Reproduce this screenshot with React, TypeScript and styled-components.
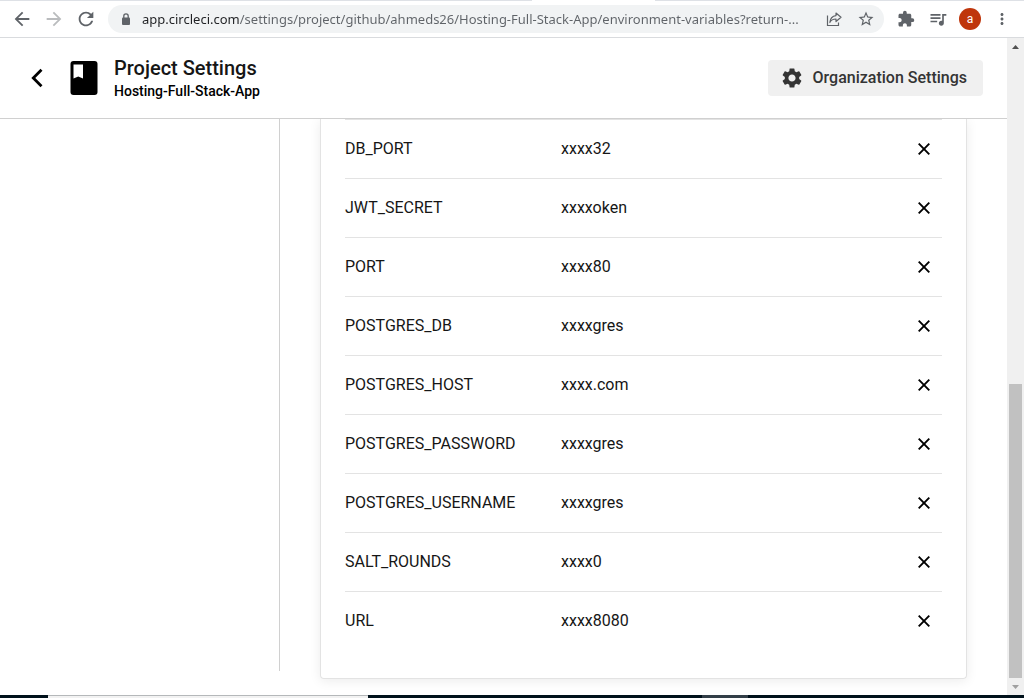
import React from "react";
import styled, { createGlobalStyle } from "styled-components";
import {
  MdArrowBack,
  MdArrowForward,
  MdExtension,
  MdMoreVert,
  MdQueueMusic,
  MdRefresh,
  MdSettings,
  MdStarBorder,
} from "react-icons/md";

const GlobalStyle = createGlobalStyle`
  *, *::before, *::after { box-sizing: border-box; }
  body {
    margin: 0;
    background: #ffffff;
    color: #161616;
    font-family: Roboto, "Liberation Sans", sans-serif;
    font-size: 16px;
  }
  button, input { font: inherit; color: inherit; }
`;

const Screen = styled.div`
  display: flex;
  flex-direction: column;
  min-height: 100vh;
`;

/* Browser toolbar */

const TabStrip = styled.div`
  display: flex;
  height: 1px;
  background: #dee1e6;
`;

const ActiveTab = styled.div`
  width: 12%;
  margin-left: 52%;
  background: #ffffff;
`;

const Toolbar = styled.nav`
  display: flex;
  align-items: center;
  height: 37px;
  padding: 0 6px;
  border-bottom: 1px solid #d9dbde;
`;

const ToolButton = styled.button<{ $faded?: boolean }>`
  display: flex;
  flex: none;
  align-items: center;
  justify-content: center;
  width: 32px;
  height: 28px;
  padding: 0;
  border: 0;
  background: none;
  color: ${(p) => (p.$faded ? "#babcbe" : "#5f6368")};
`;

const Address = styled.label`
  display: flex;
  flex: 1;
  align-items: center;
  min-width: 0;
  height: 28px;
  margin: 0 6px;
  padding: 0 2px 0 13px;
  border-radius: 14px;
  background: #f1f3f4;
  color: #5f6368;
`;

const AddressInput = styled.input`
  flex: 1;
  min-width: 0;
  height: 24px;
  margin-left: 11px;
  padding: 0;
  border: 0;
  outline: 0;
  background: linear-gradient(to right, #202124 98px, #5f6368 98px);
  background-clip: text;
  -webkit-background-clip: text;
  color: transparent;
  font-family: "Noto Sans", "Open Sans", sans-serif;
  font-size: 13px;
`;

const Avatar = styled.span`
  display: flex;
  align-items: center;
  justify-content: center;
  width: 22px;
  height: 22px;
  border-radius: 50%;
  background: #bf360c;
  color: #ffffff;
  font-size: 12px;
`;

/* Page */

const Viewport = styled.div`
  display: flex;
  flex: 1;
`;

const Page = styled.div`
  display: flex;
  flex: 1;
  flex-direction: column;
  min-width: 0;
`;

const Header = styled.header`
  position: relative;
  z-index: 1;
  display: flex;
  align-items: center;
  height: 81px;
  padding: 0 24px;
  border-bottom: 1px solid #d0d0d0;
  background: #ffffff;
`;

const BackLink = styled.a`
  display: flex;
  justify-content: center;
  width: 26px;
  margin-right: 20px;
  color: #000000;
`;

const Titles = styled.div`
  flex: 1;
  margin-left: 16px;
  padding-top: 1px;
`;

const Title = styled.h1`
  margin: 0 0 1px;
  font-size: 20px;
  font-weight: 500;
  line-height: 24px;
`;

const ProjectName = styled.p`
  margin: 0;
  color: #000000;
  font-size: 14px;
  font-weight: 500;
  line-height: 20px;
`;

const SettingsButton = styled.button`
  display: flex;
  align-items: center;
  gap: 9px;
  height: 36px;
  padding: 0 16px 1px 12px;
  border: 0;
  border-radius: 4px;
  background: #f0f0f0;
  color: #343434;
  font-size: 16px;
  font-weight: 500;
`;

const Body = styled.div`
  display: flex;
  flex: 1;
`;

const Sidebar = styled.aside`
  flex: none;
  width: 280px;
  margin-bottom: 24px;
  border-right: 1px solid #d0d0d0;
`;

const Main = styled.main`
  flex: 1;
  min-width: 0;
  padding: 0 40px 16px;
`;

const Card = styled.section`
  height: 100%;
  padding: 0 24px 27px;
  border: 1px solid #e3e3e3;
  border-top: 0;
  border-radius: 0 0 4px 4px;
  box-shadow: 0 2px 12px rgba(0, 0, 0, 0.08);
`;

const Table = styled.table`
  width: 100%;
  border-top: 1px solid #e3e3e3;
  border-spacing: 0;
  table-layout: fixed;
`;

const Row = styled.tr`
  & > * {
    border-bottom: 1px solid #e3e3e3;
  }
  &:last-child > * {
    border-bottom-color: transparent;
  }
`;

const NameCell = styled.th`
  width: 216px;
  height: 59px;
  padding: 0 0 2px;
  font-weight: 400;
  text-align: left;
`;

const ValueCell = styled.td`
  padding: 0 0 2px;
`;

const ActionCell = styled.td`
  width: 36px;
  padding: 0;
`;

const RemoveButton = styled.button`
  display: flex;
  align-items: center;
  justify-content: center;
  width: 36px;
  height: 36px;
  padding: 0;
  border: 0;
  background: none;
  color: #000000;
`;

/* Scroll bar */

const ScrollBar = styled.div`
  display: flex;
  flex: none;
  flex-direction: column;
  align-items: center;
  width: 17px;
  background: #f0f0f0;
`;

const ScrollArrow = styled.div<{ $dim?: boolean }>`
  display: flex;
  flex: none;
  align-items: center;
  height: 17px;
  color: ${(p) => (p.$dim ? "#a0a0a0" : "#505050")};
`;

const ScrollGap = styled.div`
  flex: 329;
`;

const ScrollThumb = styled.div`
  flex: 294;
  width: 13px;
  background: #c1c1c1;
`;

/* Taskbar */

const Taskbar = styled.footer`
  display: flex;
  height: 3px;
  background: #00111b;
`;

const TaskSearch = styled.div`
  width: 320px;
  margin-left: 48px;
  border-top: 1px solid #b5b8ba;
  background: #f2f2f2;
`;

const TaskActive = styled.div`
  width: 46px;
  margin-left: 334px;
  background: #333f48;
`;

const variables = [
  ["DB_PORT", "xxxx32"],
  ["JWT_SECRET", "xxxxoken"],
  ["PORT", "xxxx80"],
  ["POSTGRES_DB", "xxxxgres"],
  ["POSTGRES_HOST", "xxxx.com"],
  ["POSTGRES_PASSWORD", "xxxxgres"],
  ["POSTGRES_USERNAME", "xxxxgres"],
  ["SALT_ROUNDS", "xxxx0"],
  ["URL", "xxxx8080"],
];

const LockIcon = () => (
  <svg width="10" height="12" viewBox="0 0 10 12">
    <rect x="1" y="4.500" width="8" height="7.500" rx="1" fill="currentColor" />
    <path d="M2.800 5V3a2.200 2.200 0 0 1 4.400 0v2" fill="none" stroke="currentColor" strokeWidth="1.300" />
  </svg>
);

const ShareIcon = () => (
  <svg width="16" height="16" viewBox="0 0 16 16" fill="none" stroke="currentColor" strokeWidth="1.2">
    <path d="M1.500 4.500v10h11v-3" />
    <path d="M10 2l5 4.300-5 4.200V8C7 8 5 9 3.800 11.500 4.200 7.500 6.500 5 10 4.600z" strokeLinejoin="round" />
  </svg>
);

const ChevronIcon = () => (
  <svg width="14" height="20" viewBox="0 0 14 20" fill="none" stroke="currentColor" strokeWidth="2.800">
    <path d="M11.500 1.800L3.300 10l8.200 8.200" />
  </svg>
);

const BookIcon = () => (
  <svg width="28" height="34" viewBox="0 0 28 34">
    <rect x="0.500" width="27" height="34" rx="3" fill="#000000" />
    <path d="M3.500 3.500h9.500v14l-4.750-2-4.750 2z" fill="#ffffff" />
  </svg>
);

const CrossIcon = () => (
  <svg width="12" height="12" viewBox="0 0 12 12" stroke="currentColor" strokeWidth="1.900">
    <path d="M0.700 0.700l10.600 10.600M11.300 0.700L0.700 11.300" />
  </svg>
);

export default function App() {
  return (
    <Screen>
      <GlobalStyle />
      <TabStrip>
        <ActiveTab />
      </TabStrip>
      <Toolbar>
        <ToolButton aria-label="Back"><MdArrowBack size={22} /></ToolButton>
        <ToolButton aria-label="Forward" $faded><MdArrowForward size={22} /></ToolButton>
        <ToolButton aria-label="Reload"><MdRefresh size={22} /></ToolButton>
        <Address>
          <LockIcon />
          <AddressInput
            aria-label="Address"
            defaultValue="app.circleci.com/settings/project/github/ahmeds26/Hosting-Full-Stack-App/environment-variables?return-..."
          />
          <ToolButton aria-label="Share"><ShareIcon /></ToolButton>
          <ToolButton aria-label="Bookmark"><MdStarBorder size={18} /></ToolButton>
        </Address>
        <ToolButton aria-label="Extensions"><MdExtension size={18} /></ToolButton>
        <ToolButton aria-label="Media"><MdQueueMusic size={20} /></ToolButton>
        <ToolButton aria-label="Profile"><Avatar>a</Avatar></ToolButton>
        <ToolButton aria-label="Menu"><MdMoreVert size={18} /></ToolButton>
      </Toolbar>

      <Viewport>
        <Page>
          <Header>
            <BackLink href="#" aria-label="Back to project"><ChevronIcon /></BackLink>
            <BookIcon />
            <Titles>
              <Title>Project Settings</Title>
              <ProjectName>Hosting-Full-Stack-App</ProjectName>
            </Titles>
            <SettingsButton>
              <MdSettings size={24} />
              Organization Settings
            </SettingsButton>
          </Header>
          <Body>
            <Sidebar />
            <Main>
              <Card>
                <Table>
                  <tbody>
                    {variables.map(([name, value]) => (
                      <Row key={name}>
                        <NameCell scope="row">{name}</NameCell>
                        <ValueCell>{value}</ValueCell>
                        <ActionCell>
                          <RemoveButton aria-label={`Remove ${name}`}>
                            <CrossIcon />
                          </RemoveButton>
                        </ActionCell>
                      </Row>
                    ))}
                  </tbody>
                </Table>
              </Card>
            </Main>
          </Body>
        </Page>
        <ScrollBar aria-hidden="true">
          <ScrollArrow>
            <svg width="7" height="4" viewBox="0 0 7 4"><path d="M0 4L3.500 0 7 4z" fill="currentColor" /></svg>
          </ScrollArrow>
          <ScrollGap />
          <ScrollThumb />
          <ScrollArrow $dim>
            <svg width="7" height="4" viewBox="0 0 7 4"><path d="M0 0l3.500 4L7 0z" fill="currentColor" /></svg>
          </ScrollArrow>
        </ScrollBar>
      </Viewport>

      <Taskbar>
        <TaskSearch />
        <TaskActive />
      </Taskbar>
    </Screen>
  );
}
